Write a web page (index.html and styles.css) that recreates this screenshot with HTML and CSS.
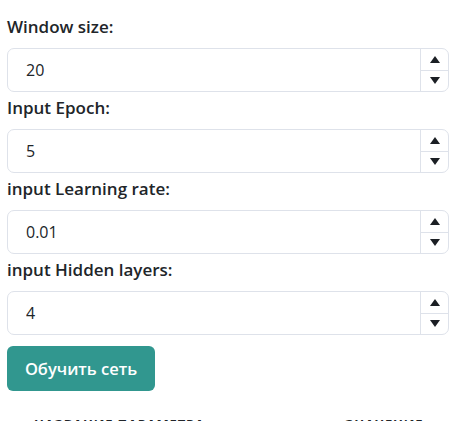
FILE: index.html
```html
<!DOCTYPE html>
<html lang="ru">
<head>
<meta charset="utf-8">
<link rel="stylesheet" href="styles.css">
</head>
<body>
<div class="page">
  <form class="params">
    <div class="field">
      <label class="lbl" for="ws">Window size:</label>
      <div class="num">
        <input id="ws" class="num-input" type="text" value="20">
        <div class="spin"><span class="up"></span><span class="down"></span></div>
      </div>
    </div>
    <div class="field">
      <label class="lbl" for="ep">Input Epoch:</label>
      <div class="num">
        <input id="ep" class="num-input" type="text" value="5">
        <div class="spin"><span class="up"></span><span class="down"></span></div>
      </div>
    </div>
    <div class="field">
      <label class="lbl" for="lr">input Learning rate:</label>
      <div class="num">
        <input id="lr" class="num-input" type="text" value="0.01">
        <div class="spin"><span class="up"></span><span class="down"></span></div>
      </div>
    </div>
    <div class="field">
      <label class="lbl" for="hl">input Hidden layers:</label>
      <div class="num">
        <input id="hl" class="num-input" type="text" value="4">
        <div class="spin"><span class="up"></span><span class="down"></span></div>
      </div>
    </div>
    <button type="button" class="btn">Обучить сеть</button>
  </form>
  <table class="tbl">
    <thead>
      <tr><th class="c1">Название параметра</th><th class="c2">Значение</th></tr>
    </thead>
  </table>
</div>
</body>
</html>
```
FILE: styles.css
```css
html, body { margin: 0; padding: 0; background: #fff; }
body {
  font-family: "Open Sans", "Noto Sans", sans-serif;
  color: #212529;
  overflow: hidden;
}
.page { padding: 14px 2px 0 7px; }
.params { display: flex; flex-direction: column; }
.field { display: flex; flex-direction: column; }
.field + .field .lbl { margin-top: 3px; }
.lbl {
  display: block;
  font-size: 17px;
  font-weight: 600;
  line-height: 25px;
  margin: 0 0 9px 0;
  color: #212529;
}
.num {
  display: flex;
  height: 44px;
  box-sizing: border-box;
  border: 1px solid #dee2ea;
  border-radius: 7px;
  overflow: hidden;
  width: 442px;
}
.num-input {
  flex: 1;
  min-width: 0;
  border: 0;
  outline: 0;
  padding: 0 0 0 18px;
  font-family: "Open Sans", "Noto Sans", sans-serif;
  font-size: 16px;
  color: #212529;
  background: transparent;
}
.spin {
  width: 27px;
  border-left: 1px solid #dee2ea;
  display: flex;
  flex-direction: column;
}
.spin span {
  flex: 1;
  display: flex;
  align-items: center;
  justify-content: center;
}
.spin .up { border-bottom: 1px solid #dee2ea; }
.spin .up::before {
  content: "";
  border-left: 5px solid transparent;
  border-right: 5px solid transparent;
  border-bottom: 7px solid #1b1f24;
}
.spin .down::before {
  content: "";
  border-left: 5px solid transparent;
  border-right: 5px solid transparent;
  border-top: 7px solid #1b1f24;
}
.btn {
  align-self: flex-start;
  margin-top: 11px;
  width: 148px;
  height: 45px;
  border: 0;
  border-radius: 6px;
  background: #31978f;
  color: #fff;
  font-family: "Open Sans", "Noto Sans", sans-serif;
  font-size: 16.5px;
  font-weight: 600;
  padding: 0;
}
.tbl {
  width: 442px;
  border-collapse: collapse;
  margin-top: 19px;
}
.tbl th {
  text-transform: uppercase;
  font-size: 13px;
  font-weight: 700;
  letter-spacing: 0.8px;
  padding: 5px 0 8px;
  text-align: left;
  color: #212529;
}
.tbl .c1 { padding-left: 27px; }
.tbl .c2 { padding-left: 0; width: 104px; }
```
